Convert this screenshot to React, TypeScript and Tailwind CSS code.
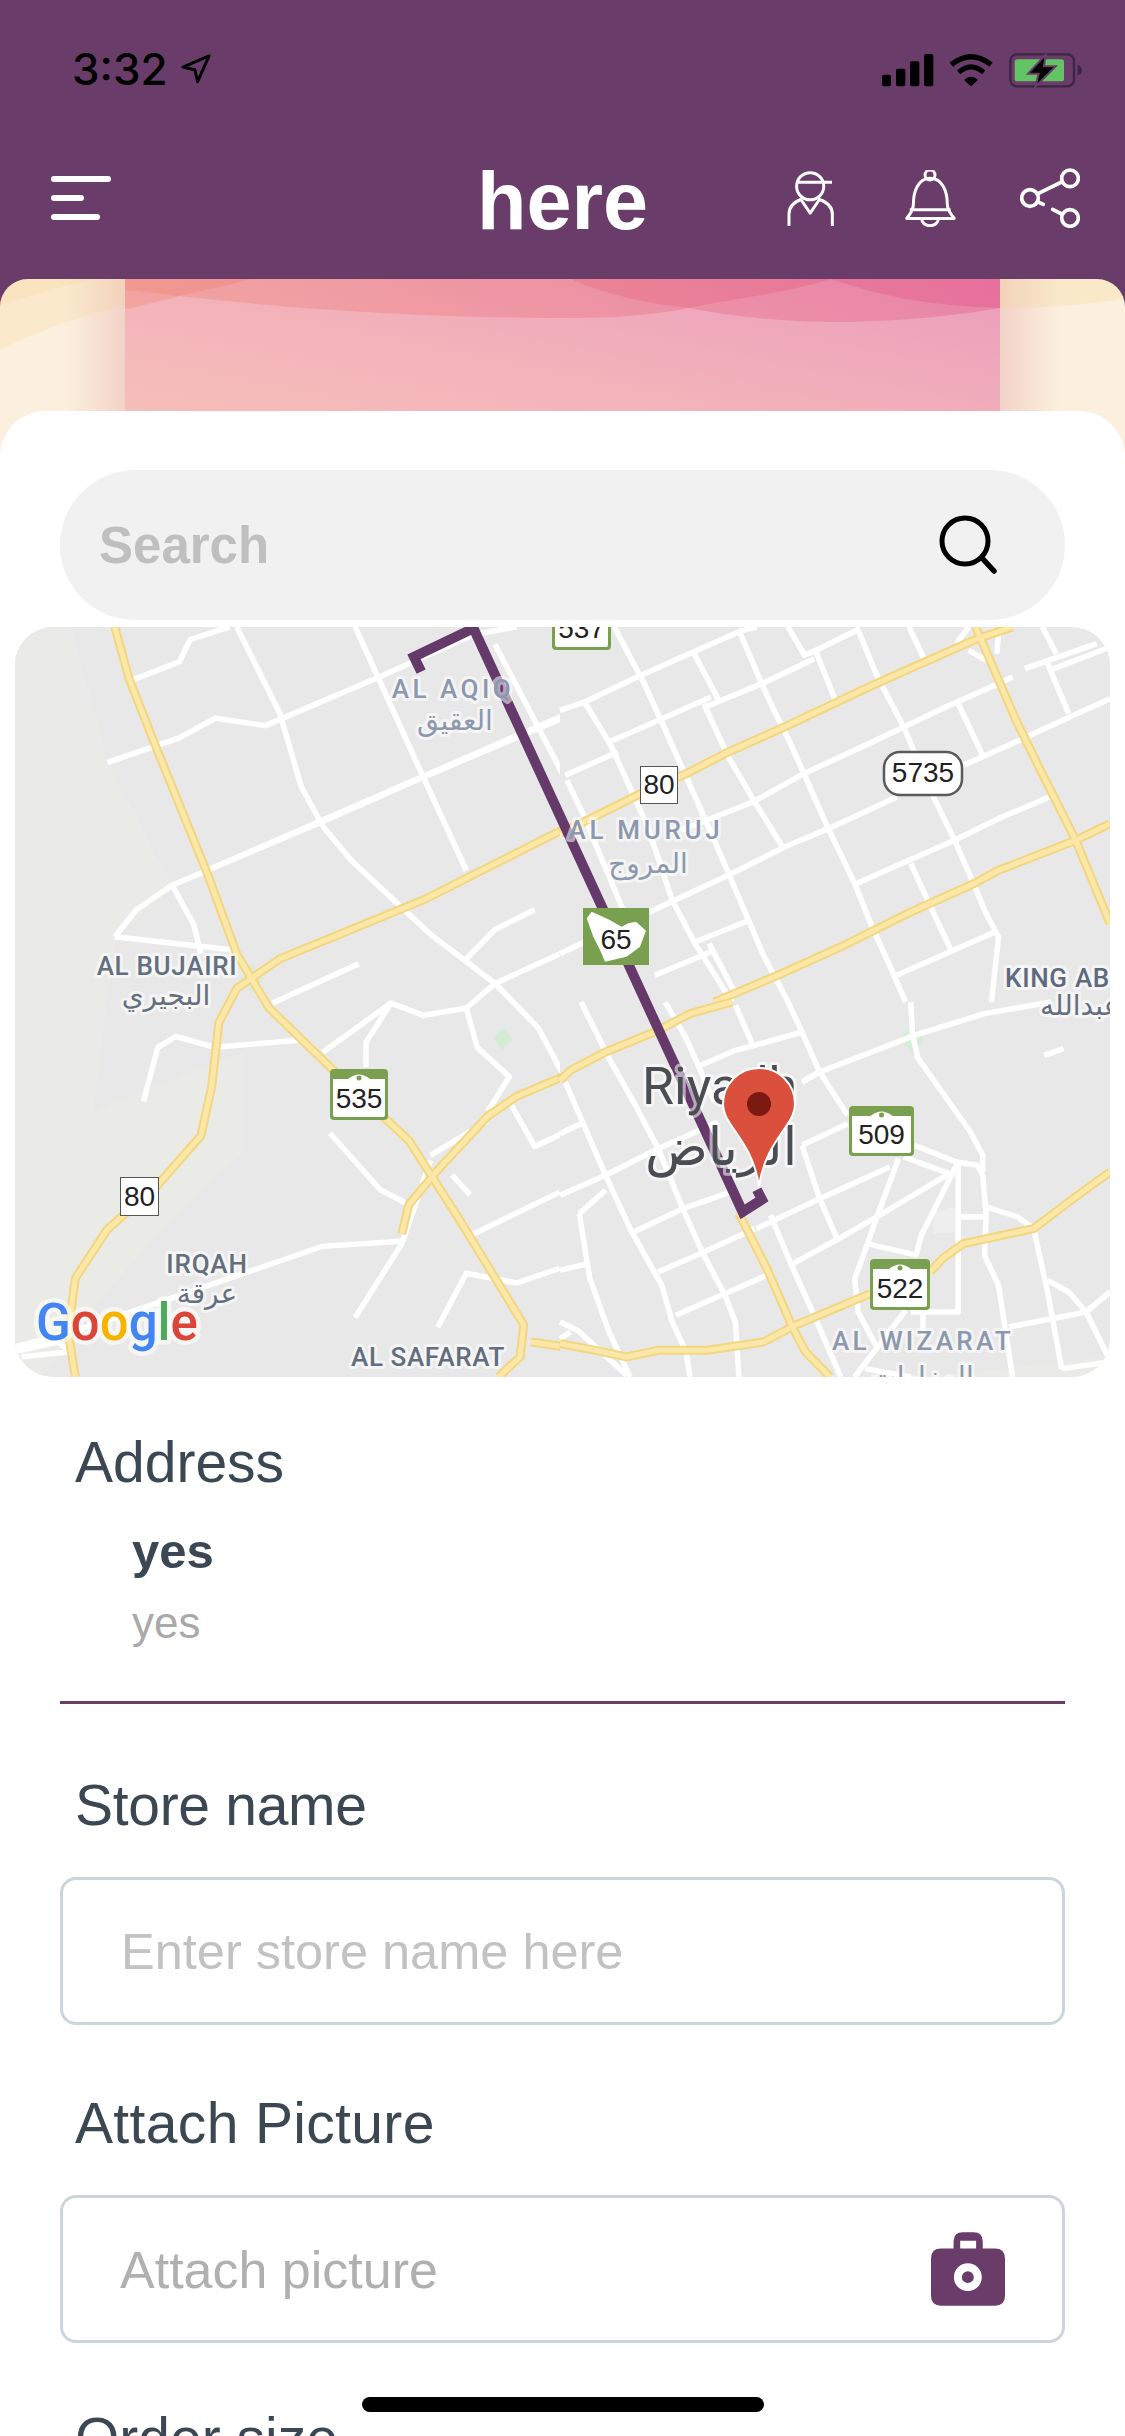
const PURPLE = "#693c6a";

const whiteRoads = [
  "150,290 250,240 300,200 370,215 530,115 660,30 720,14",
  "180,125 250,85 265,40 320,14",
  "240,540 450,410 590,320 800,190",
  "296,505 590,318 800,185",
  "160,645 190,590 240,540 270,620 280,680",
  "160,645 325,672",
  "330,14 390,190 420,340 450,420 490,490 600,640 690,740 750,830 790,940 850,1150 920,1340 960,1541",
  "495,14 590,320 650,510",
  "690,50 790,330 900,660",
  "380,780 500,700",
  "650,690 690,630 745,590",
  "690,740 780,680",
  "650,790 690,740",
  "450,880 545,780 590,805 650,790 665,870 710,930 680,1000",
  "510,910 510,860 545,780",
  "300,870 420,855",
  "200,980 220,870 245,848 300,870",
  "460,1045 530,1160 570,1190",
  "600,1090 680,1020",
  "710,980 745,1072 815,1025",
  "630,1130 655,1170",
  "20,1480 100,1450 300,1350 450,1275 560,1265",
  "495,1420 560,1270 600,1100",
  "610,1440 650,1330 720,1350 780,1320",
  "660,1250 780,1165",
  "20,1490 80,1470 100,1490 30,1500",
];

const cropA = [
  "0,250 70,225 220,150 380,75 520,10 560,0",
  "155,0 210,110 240,170 290,285 360,450 440,640 485,750 580,985 650,1125",
  "70,225 145,355 250,600 320,820 385,950 490,1125",
  "380,75 455,225",
  "410,230 480,390 555,525 635,660",
  "510,10 575,170 610,250 655,345 695,440 765,605 840,770 890,900 950,1040 985,1125",
  "650,0 700,90",
  "730,75 785,220",
  "850,10 905,150 980,300 1010,375",
  "1060,500 1125,640 1175,760 1210,850 1250,930 1230,1125",
  "995,0 1040,100",
  "140,345 270,285 430,210",
  "15,445 165,375",
  "415,240 575,170 725,95",
  "695,85 730,70 855,5",
  "550,525 695,440 880,350 980,300 1110,235 1250,170 1290,150",
  "345,610 550,525",
  "255,855 480,745 640,660 765,605 960,510",
  "1150,415 1310,340 1380,305 1568,215",
  "845,770 930,730 1125,640 1250,575 1395,510",
  "385,945 540,880",
  "0,980 70,945",
  "270,1045 430,975",
  "960,1045 1240,915",
  "1000,710 1050,825 1115,970",
  "1135,230 1205,385",
  "1325,125 1530,50",
  "1395,130 1568,60",
  "1390,110 1450,260",
  "1375,0 1415,80",
  "1165,70 1215,100",
  "1130,50 1165,0",
  "1250,20 1245,80",
  "425,950 500,1100",
  "20,460 65,560 180,850",
  "0,620 50,650",
];

const cropB = [
  "60,0 100,85 140,170 220,320 280,440 350,620 410,760 470,880 500,960 510,1125",
  "15,240 130,520 200,680 290,850 320,960 360,1050 370,1125",
  "300,0 360,110 440,300",
  "500,10 550,130",
  "650,0 690,90 740,210 820,340",
  "690,430 740,590 790,710",
  "0,395 70,360",
  "0,580 130,520 280,440 450,360",
  "210,690 350,620 500,565",
  "560,680 740,590 940,495",
  "280,810 410,750 555,680",
  "330,940 590,820",
  "655,790 795,710 910,640 1110,515",
  "740,210 950,125 1010,100 1210,35 1400,0",
  "690,240 740,210",
  "690,430 820,365",
  "1010,430 1130,480 1190,490 1205,520 1215,640 1210,760 1250,850 1290,1125",
  "1015,160 1170,390 1205,460 1205,510",
  "1000,0 1005,100 1020,165",
  "980,465 1110,515",
  "965,470 905,640 875,730 840,830 850,930 900,1030",
  "1135,480 1030,700 1015,760",
  "1135,480 1135,930 1000,930",
  "1135,645 1210,645",
  "875,725 1020,760",
  "1215,615 1305,645 1350,680 1390,870 1430,1100",
  "1390,835 1450,870 1500,930 1560,1060",
  "1280,975 1500,930 1568,870",
  "840,1125 985,925",
  "1035,930 1035,1000",
  "600,640 660,790 720,930 800,1125",
  "55,635 130,565",
  "55,635 85,830 140,990 200,1125",
  "0,805 80,785",
  "0,960 50,985 190,1120",
  "0,1010 30,990",
  "500,145 555,130 690,90",
  "390,195 500,145",
  "1380,160 1435,140",
  "1430,1100 1568,1080",
  "870,1100 1000,1125",
];

const yellowLeft = [
  "160,14 180,120 215,250 290,520 330,680 375,790 460,910 570,1060 640,1220 730,1435 725,1500 695,1541",
  "800,420 780,430 590,570 390,690 330,750 305,820 295,950 280,1050 220,1150 150,1240 105,1340 95,1450 105,1541",
  "800,920 720,970 680,1010 610,1120 570,1190 560,1250",
  "740,1470 870,1497 1000,1495",
];
const yellowA = [
  "0,620 230,500 360,440 470,380 650,295 860,190 965,140 1190,35 1290,0",
  "1185,0 1300,280 1365,420 1470,640 1568,890",
  "440,1125 610,1050 800,960 990,860 1180,770 1250,730 1470,640 1568,590",
];
const yellowB = [
  "0,235 30,205 130,150 280,85 370,35 490,0",
  "510,635 590,800 660,970 700,1050 770,1125",
  "0,1025 100,1045 190,1065 280,1045 420,1045 580,1020 670,970 885,875",
  "1055,810 1090,770 1150,725 1350,680 1450,600 1568,510",
];

function Lines({ data, color, width }: { data: string[]; color: string; width: number }) {
  return (
    <>
      {data.map((p, i) => (
        <polyline key={i} points={p} fill="none" stroke={color} strokeWidth={width} vectorEffect="non-scaling-stroke" strokeLinejoin="round" />
      ))}
    </>
  );
}

function Shield({ x, y, w, h, n }: { x: number; y: number; w: number; h: number; n: string }) {
  const cx = x + w / 2;
  return (
    <g>
      <rect x={x} y={y} width={w} height={h} rx={4} fill="#78a04f" />
      <path d={`M${x + 3} ${y + 10} H${cx - 11} Q${cx} ${y + 1} ${cx + 11} ${y + 10} H${x + w - 3} V${y + h - 5} Q${x + w - 3} ${y + h - 3} ${x + w - 5} ${y + h - 3} H${x + 5} Q${x + 3} ${y + h - 3} ${x + 3} ${y + h - 5} Z`} fill="#fff" />
      <circle cx={cx} cy={y + 9} r={2.5} fill="#78a04f" />
      <text x={cx} y={y + h - 12} textAnchor="middle" fontSize={28} fill="#222" fontFamily="'Liberation Sans', sans-serif">{n}</text>
    </g>
  );
}

function Label({ x, y, t, size = 26, fill = "#8b98ad", ls = 1, anchor = "middle", weight = 500 }: { x: number; y: number; t: string; size?: number; fill?: string; ls?: number; anchor?: "middle" | "start"; weight?: number }) {
  return (
    <text
      x={x}
      y={y}
      textAnchor={anchor}
      fontSize={size}
      fill={fill}
      letterSpacing={ls}
      fontWeight={weight}
      stroke="#ffffff"
      strokeOpacity={0.55}
      strokeWidth={6}
      strokeLinejoin="round"
      paintOrder="stroke"
      fontFamily="Roboto, 'DejaVu Sans', sans-serif"
    >
      {t}
    </text>
  );
}

function MapArt() {
  return (
    <svg width="1096" height="750" viewBox="15 627 1096 750" className="block">
      <defs>
        <clipPath id="leftHalf">
          <rect x="0" y="600" width="560" height="800" />
        </clipPath>
      </defs>
      <rect x="15" y="627" width="1096" height="750" fill="#e8e8e8" />
      <g transform="translate(0,620) scale(0.71747,0.49116)">
        <polygon points="21,14 100,14 150,290 240,540 160,650 130,1000 60,1541 21,1541" fill="#eaeae6" />
        <polygon points="130,1000 340,880 340,1080 220,1250 130,1400 60,1541" fill="#eaeae6" />
        <polygon points="1300,1541 1547,1500 1547,1541" fill="#eaeae6" />
        <polygon points="700,830 715,852 700,875 688,852" fill="#d3ecd3" />
        <polygon points="350,700 368,730 350,760 335,730" fill="#d8ecd8" />
      </g>
      <g transform="translate(560,1002) scale(0.3508,0.3333)">
        <polygon points="1003,65 1040,110 1003,150 968,110" fill="#d4efd4" />
        <polygon points="1065,630 1125,615 1125,690 1065,695" fill="#eeeeee" />
      </g>
      <g clipPath="url(#leftHalf)">
        <g transform="translate(0,620) scale(0.71747,0.49116)">
          <Lines data={whiteRoads} color="#ffffff" width={5.5} />
        </g>
      </g>
      <g transform="translate(560,627) scale(0.3508,0.3333)">
        <Lines data={cropA} color="#ffffff" width={5.5} />
      </g>
      <g transform="translate(560,1002) scale(0.3508,0.3333)">
        <Lines data={cropB} color="#ffffff" width={5.5} />
      </g>
      <g clipPath="url(#leftHalf)">
        <g transform="translate(0,620) scale(0.71747,0.49116)">
          <Lines data={yellowLeft} color="#f3d680" width={9} />
          <Lines data={yellowLeft} color="#fbe7a8" width={5} />
        </g>
      </g>
      <g transform="translate(560,627) scale(0.3508,0.3333)">
        <Lines data={yellowA} color="#f3d680" width={9} />
        <Lines data={yellowA} color="#fbe7a8" width={5} />
      </g>
      <g transform="translate(560,1002) scale(0.3508,0.3333)">
        <Lines data={yellowB} color="#f3d680" width={9} />
        <Lines data={yellowB} color="#fbe7a8" width={5} />
      </g>
      <g transform="translate(0,620) scale(0.71747,0.49116)">
        <polyline points="587,105 577,75 660,17 1035,1205 1062,1180 1055,1160" fill="none" stroke="#653a6a" strokeWidth={10} vectorEffect="non-scaling-stroke" strokeLinejoin="miter" />
      </g>

      <Label x={453} y={698} t="AL AQIQ" ls={3.5} />
      <Label x={455} y={730} t="العقيق" size={28} ls={0} />
      <Label x={646} y={839} t="AL MURUJ" ls={3.7} />
      <Label x={648} y={873} t="المروج" size={28} ls={0} />
      <Label x={167} y={975} t="AL BUJAIRI" fill="#636e7e" ls={0.7} />
      <Label x={166} y={1005} t="البجيري" size={28} fill="#636e7e" ls={0} />
      <Label x={1005} y={987} t="KING AB" fill="#5e6a7c" ls={0.7} anchor="start" />
      <Label x={1040} y={1015} t="عبدالله" size={28} fill="#636e7e" ls={0} anchor="start" />
      <Label x={207} y={1273} t="IRQAH" fill="#636e7e" ls={0.8} />
      <Label x={207} y={1303} t="عرقة" size={28} fill="#636e7e" ls={0} />
      <Label x={428} y={1366} t="AL SAFARAT" fill="#636e7e" ls={0.6} />
      <Label x={923} y={1350} t="AL WIZARAT" ls={3.3} />
      <Label x={922} y={1386} t="المزارات" size={28} ls={0} />
      <Label x={642} y={1104} t="Riyadh" size={52} fill="#4a4e53" ls={0} anchor="start" weight={400} />
      <Label x={721} y={1165} t="الرياض" size={52} fill="#4a4e53" ls={0} weight={400} />

      <Shield x={330} y={1069} w={58} h={51} n="535" />
      <Shield x={849} y={1106} w={65} h={50} n="509" />
      <Shield x={870} y={1259} w={60} h={51} n="522" />
      <Shield x={552} y={600} w={59} h={50} n="537" />

      <rect x="640.5" y="766.5" width="37" height="37" fill="#fff" stroke="#555" />
      <text x="659" y="794" textAnchor="middle" fontSize={28} fill="#222" fontFamily="'Liberation Sans', sans-serif">80</text>
      <rect x="120.5" y="1177.5" width="38" height="38" fill="#fff" stroke="#555" />
      <text x="139.5" y="1206" textAnchor="middle" fontSize={28} fill="#222" fontFamily="'Liberation Sans', sans-serif">80</text>

      <rect x="884" y="752" width="78" height="43" rx="16" fill="#fff" stroke="#5a5a5a" strokeWidth="2.5" />
      <text x="923" y="782" textAnchor="middle" fontSize={28} fill="#222" fontFamily="'Liberation Sans', sans-serif">5735</text>

      <rect x="583" y="908" width="66" height="57" fill="#78a04f" />
      <g transform="translate(560,880) scale(0.3333)">
        <polygon points="95,95 145,118 185,140 205,130 228,125 258,152 240,200 200,230 135,245 120,210 100,170 80,115" fill="#fff" />
      </g>
      <text x="616" y="949" textAnchor="middle" fontSize={28} fill="#222" fontFamily="'Liberation Sans', sans-serif">65</text>

      <path
        d="M759 1186 C755 1160 745 1145 733 1128 C726 1118 723 1112 723 1104 A36 36 0 1 1 795 1104 C795 1112 792 1118 785 1128 C773 1145 763 1160 759 1186 Z"
        fill="#da503c"
        stroke="#fff"
        strokeWidth="2"
      />
      <circle cx="759" cy="1104" r="12" fill="#7a1a10" />

      <text x="36" y="1340" fontSize={51} fontWeight={500} fontFamily="Roboto, sans-serif" stroke="#ffffff" strokeOpacity={0.55} strokeWidth={9} strokeLinejoin="round" paintOrder="stroke">
        <tspan fill="#4285f4">G</tspan>
        <tspan fill="#db4437">o</tspan>
        <tspan fill="#f4b400">o</tspan>
        <tspan fill="#4285f4">g</tspan>
        <tspan fill="#4dab5c">l</tspan>
        <tspan fill="#db4437">e</tspan>
      </text>
    </svg>
  );
}

function BannerArt() {
  return (
    <svg width="1125" height="180" viewBox="0 279 1125 180" className="block">
      <defs>
        <linearGradient id="pale" x1="0" y1="1" x2="1" y2="0">
          <stop offset="0" stopColor="#f6c2b9" />
          <stop offset="0.55" stopColor="#f2b0ba" />
          <stop offset="1" stopColor="#eb9dbb" />
        </linearGradient>
        <linearGradient id="deep" gradientUnits="userSpaceOnUse" x1="125" y1="0" x2="1000" y2="0">
          <stop offset="0" stopColor="#f07f66" />
          <stop offset="1" stopColor="#e0457f" />
        </linearGradient>
        <linearGradient id="fadeL" x1="0" y1="0" x2="1" y2="0">
          <stop offset="0" stopColor="#f3d4c8" stopOpacity="0" />
          <stop offset="1" stopColor="#f2d2c8" />
        </linearGradient>
        <linearGradient id="fadeR" x1="1" y1="0" x2="0" y2="0">
          <stop offset="0" stopColor="#f3d4c8" stopOpacity="0" />
          <stop offset="1" stopColor="#f2d2c8" />
        </linearGradient>
        <clipPath id="band">
          <rect x="125" y="279" width="875" height="180" />
        </clipPath>
      </defs>
      <rect x="0" y="279" width="1125" height="180" fill="#fbf0dd" />
      <rect x="65" y="279" width="60" height="180" fill="url(#fadeL)" />
      <rect x="1000" y="279" width="60" height="180" fill="url(#fadeR)" />
      <path d="M0 350 C 60 320 130 300 251 279 H0 Z" fill="#f5d38f" opacity="0.22" />
      <path d="M0 305 C 30 296 60 288 90 279 H0 Z" fill="#f5d38f" opacity="0.2" />
      <path d="M1125 298 C 1080 306 1040 308 1000 308 L 1000 279 H1125 Z" fill="#f5d38f" opacity="0.25" />
      <rect x="125" y="279" width="875" height="180" fill="url(#pale)" />
      <g clipPath="url(#band)">
        <path d="M29 279 C 90 287 130 290 179 296 C 320 312 450 318 570 318 C 620 318 660 314 689 308 C 740 298 790 292 831 279 Z" fill="url(#deep)" opacity="0.3" />
        <path d="M0 350 C 60 320 130 310 179 296 C 205 290 230 285 251 279 H0 Z" fill="url(#deep)" opacity="0.3" />
        <path d="M570 279 C 610 296 650 304 689 308 C 740 318 790 322 831 322 C 900 322 960 315 1000 308 V279 Z" fill="url(#deep)" opacity="0.3" />
        <path d="M831 279 C 880 296 930 306 1000 308 V279 Z" fill="url(#deep)" opacity="0.3" />
      </g>
    </svg>
  );
}

function StatusBar() {
  return (
    <div className="flex h-[104px] items-start justify-between pl-[72px] pr-[43px] pt-[52px]">
      <div className="flex items-start gap-[13px]">
        <span className="text-[44px] leading-[34px] font-medium text-black [font-family:Inter,sans-serif]">3:32</span>
        <svg width="30" height="30" viewBox="538 70 92 92" className="mt-[2px]">
          <path d="M624 76 L544 110 L581 119 L589 155 Z" fill="none" stroke="#000" strokeWidth="9" strokeLinejoin="round" />
        </svg>
      </div>
      <svg width="200" height="36" viewBox="366 62 600 108">
        <rect x="366" y="130" width="27" height="35" rx="6" fill="#000" />
        <rect x="408" y="112" width="28" height="53" rx="6" fill="#000" />
        <rect x="450" y="90" width="28" height="75" rx="6" fill="#000" />
        <rect x="492" y="68" width="28" height="97" rx="6" fill="#000" />
        <path d="M574 100 Q633 52 693 100" fill="none" stroke="#000" strokeWidth="16" />
        <path d="M596 123 Q633 90 671 123" fill="none" stroke="#000" strokeWidth="15" />
        <path d="M612 146 Q633 126 654 146 L633 165 Z" fill="#000" />
        <rect x="751" y="69" width="191" height="96" rx="20" fill="none" stroke="#3f2444" strokeWidth="7" />
        <path d="M953 100 Q966 106 966 117 Q966 128 953 133 Z" fill="#3f2444" />
        <rect x="764" y="84" width="148" height="66" rx="8" fill="#63c466" />
        <path d="M857 70 L804 127 L836 127 L826 166 L887 105 L852 105 Z" fill="#000" stroke={PURPLE} strokeWidth="6" />
      </svg>
    </div>
  );
}

function Person() {
  return (
    <svg width="47" height="57" viewBox="80 418 142 172">
      <g fill="none" stroke="#fff" strokeWidth="9" strokeLinecap="butt" strokeLinejoin="round">
        <circle cx="150" cy="467" r="41" />
        <path d="M110 455 H216" />
        <path d="M86 587 V552 Q86 520 122 507 L150 548 L178 507 Q217 520 217 552 V587" />
      </g>
    </svg>
  );
}

function Bell() {
  return (
    <svg width="51" height="57" viewBox="435 420 153 172">
      <g fill="none" stroke="#fff" strokeWidth="9" strokeLinejoin="round">
        <circle cx="510" cy="435" r="15" />
        <path d="M510 445 C472 445 460 490 460 520 C460 545 448 553 440 566 H583 C575 553 562 545 562 520 C562 490 550 445 510 445 Z" />
        <path d="M449 540 H572" />
        <path d="M485 568 A25 20 0 0 0 535 568" />
      </g>
    </svg>
  );
}

function Share() {
  return (
    <svg width="60" height="60" viewBox="780 413 180 180">
      <g fill="none" stroke="#fff" strokeWidth="11" strokeLinecap="round">
        <circle cx="930" cy="444" r="25" />
        <circle cx="810" cy="503" r="25" />
        <circle cx="930" cy="563" r="25" />
        <path d="M834 490 L905 455" />
        <path d="M834 515 L850 522" />
        <path d="M878 537 L905 551" />
      </g>
    </svg>
  );
}

function NavBar() {
  return (
    <div className="grid h-[175px] grid-cols-[1fr_auto_1fr] items-start pl-[51px] pr-[51px]">
      <div className="flex flex-col gap-[13px] pt-[72px]">
        <span className="h-[6px] w-[60px] rounded-full bg-white" />
        <span className="h-[6px] w-[33px] rounded-full bg-white" />
        <span className="h-[6px] w-[49px] rounded-full bg-white" />
      </div>
      <div className="pt-[52px] text-[81px] leading-[90px] font-bold text-white">here</div>
      <div className="-mr-[6px] flex items-center justify-end pt-[64px]">
        <Person />
        <span className="ml-[71px]"><Bell /></span>
        <span className="ml-[64px]"><Share /></span>
      </div>
    </div>
  );
}

function CameraIcon() {
  return (
    <svg width="74" height="74" viewBox="152 97 223 221">
      <path
        fillRule="evenodd"
        fill={PURPLE}
        d="M248 97 H280 Q308 97 308 125 V146 H345 Q375 146 375 176 V288 Q375 318 345 318 H182 Q152 318 152 288 V176 Q152 146 182 146 H220 V125 Q220 97 248 97 Z M240 146 H288 V122 H240 Z"
      />
      <circle cx="263" cy="232" r="30" fill="none" stroke="#fff" strokeWidth="24" />
    </svg>
  );
}

export default function App() {
  return (
    <div className="relative h-[2436px] w-[1125px] overflow-hidden bg-white [font-family:'Liberation_Sans',sans-serif]">
      <div className="bg-[#693c6a]">
        <StatusBar />
        <NavBar />
        <div className="h-[180px] overflow-hidden rounded-t-[28px]">
          <BannerArt />
        </div>
      </div>

      <div className="relative -mt-[48px] rounded-t-[46px] bg-white pt-[59px]">
        <div className="mx-[60px] flex h-[150px] items-center justify-between rounded-[75px] bg-[#f1f1f1] pl-[39px] pr-[66px]">
          <span className="pt-[2px] text-[51px] font-bold text-[#bfbfbf]">Search</span>
          <svg width="60" height="60" viewBox="0 0 60 60">
            <circle cx="26" cy="26" r="23" fill="none" stroke="#000" strokeWidth="5" />
            <path d="M43 43 L55 56" stroke="#000" strokeWidth="5.5" strokeLinecap="round" />
          </svg>
        </div>

        <div className="mx-[15px] mt-[7px] h-[750px] overflow-hidden rounded-[38px]">
          <MapArt />
        </div>

        <div className="px-[60px]">
          <div className="pl-[15px] pt-[55px] text-[57px] leading-[60px] text-[#3b4853]">Address</div>
          <div className="pl-[72px] pt-[29px] text-[49px] leading-[60px] font-bold text-[#3b4853]">yes</div>
          <div className="pl-[72px] pt-[12px] text-[44px] leading-[60px] text-[#a9a9a9]">yes</div>
          <div className="mt-[48px] h-[3px] bg-[#693c6a]" />

          <div className="pl-[15px] pt-[71px] text-[57px] leading-[60px] tracking-[-0.3px] text-[#3b4853]">Store name</div>
          <div className="mt-[42px] flex h-[148px] items-center rounded-[16px] border-[3px] border-[#ccd5da] pl-[58px] pt-[2px] text-[50.5px] text-[#c2c2c2]">
            Enter store name here
          </div>

          <div className="pl-[15px] pt-[68px] text-[57px] leading-[60px] tracking-[0.35px] text-[#3b4853]">Attach Picture</div>
          <div className="mt-[42px] flex h-[148px] items-center justify-between rounded-[16px] border-[3px] border-[#ccd5da] pl-[57px] pr-[57px] text-[52px] text-[#b0b0b0]">
            <span className="pt-[2px]">Attach picture</span>
            <CameraIcon />
          </div>

          <div className="pl-[15px] pt-[65px] text-[57px] leading-[60px] text-[#3b4853]">Order size</div>
        </div>
      </div>

      <div className="absolute bottom-[24px] left-[362px] h-[15px] w-[402px] rounded-full bg-black" />
    </div>
  );
}
